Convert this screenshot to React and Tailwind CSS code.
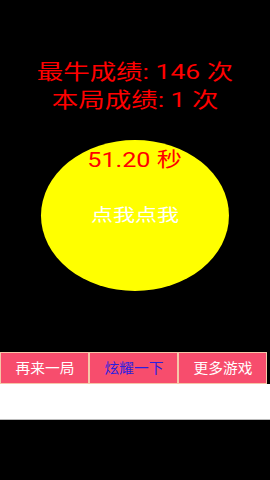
import React from 'react';

const FONT = { fontFamily: 'Roboto, "Noto Sans CJK SC", sans-serif' };

// the source screen is stretched sideways, so the text is widened to match
const Wide = ({ className, children }) => (
  <p className={className}>
    <span className="inline-block scale-x-[1.26]">{children}</span>
  </p>
);

const Btn = ({ label, blue }) => (
  <button
    className={`w-[89px] h-[32px] bg-[#f74d6d] border border-[#f6c6a8] text-[14px] leading-none ${
      blue ? 'text-[#2b1fe0]' : 'text-white'
    }`}
  >
    <span className="inline-block scale-x-[1.05]">{label}</span>
  </button>
);

export default function App() {
  return (
    <div className="w-[270px] h-[480px] bg-black flex flex-col items-center pt-[58px]" style={FONT}>
      <Wide className="text-[#ff0000] text-[21px] leading-[28px]">最牛成绩: 146 次</Wide>
      <Wide className="text-[#ff0000] text-[21px] leading-[28px]">本局成绩: 1 次</Wide>

      {/* tap target */}
      <div className="mt-[26px] w-[188px] h-[151px] rounded-[50%] bg-[#ffff00] flex flex-col items-center pt-[6px]">
        <Wide className="text-[#ff0000] text-[20px] leading-[28px]">51.20 秒</Wide>
        <Wide className="mt-[27px] text-white text-[17.5px] leading-[28px]">点我点我</Wide>
      </div>

      <div className="mt-[61px] w-full flex">
        <Btn label="再来一局" />
        <Btn label="炫耀一下" blue />
        <Btn label="更多游戏" />
      </div>
      <div className="w-full h-[36px] bg-white border-b border-[#bbbbbb]" />
    </div>
  );
}
